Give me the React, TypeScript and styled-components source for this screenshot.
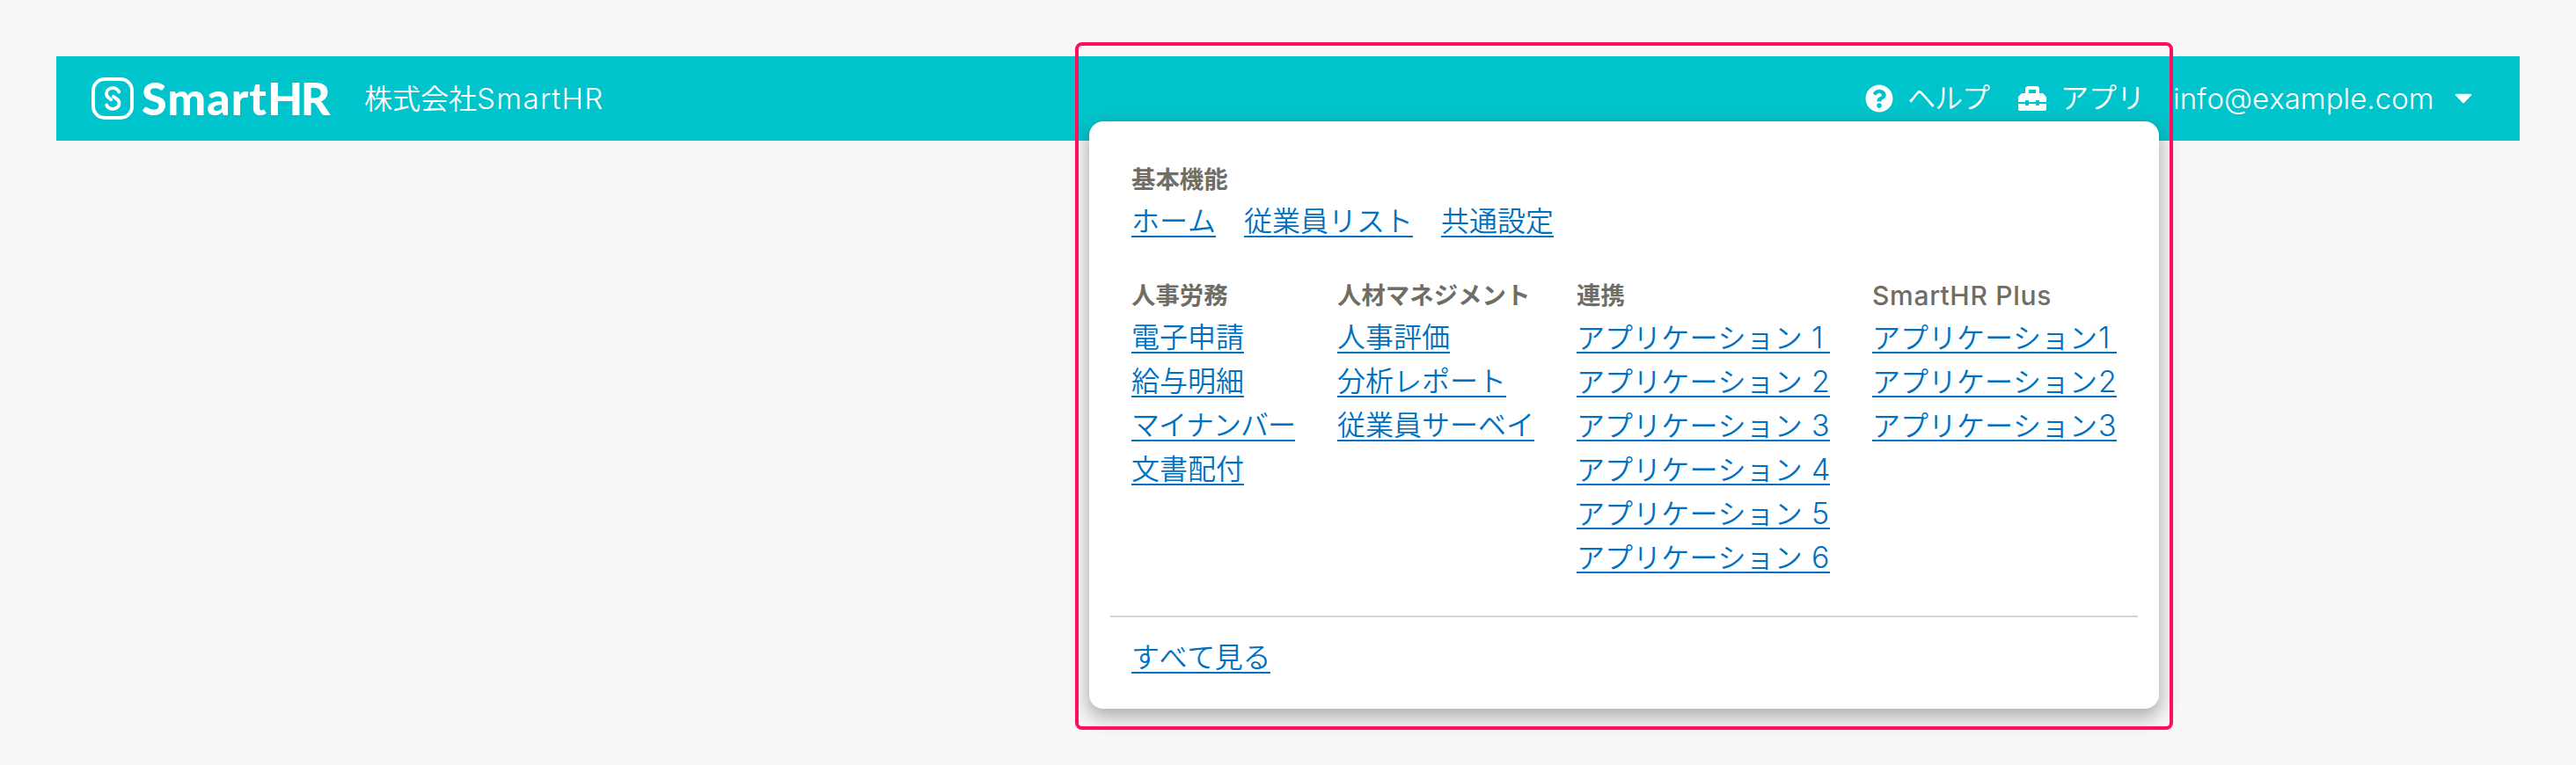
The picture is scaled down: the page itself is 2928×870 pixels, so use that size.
import React from 'react';
import styled, { createGlobalStyle } from 'styled-components';
import { FaQuestionCircle, FaToolbox } from 'react-icons/fa';

const GlobalStyle = createGlobalStyle`
  * { box-sizing: border-box; }
  body {
    margin: 0;
    background: #f8f7f5;
    font-family: Inter, "Noto Sans CJK JP", sans-serif;
    font-size: 32px;
    font-weight: 350;
    font-kerning: none;
    line-height: 1;
  }
`;

const Page = styled.div`
  position: relative;
  height: 870px;
  padding: 64px;
  overflow: hidden;
`;

const Header = styled.header`
  display: flex;
  align-items: center;
  height: 96px;
  padding: 0 54px 0 40px;
  background: #00c4cc;
  color: #fff;
`;

const Logo = styled.div`
  display: flex;
  align-items: center;
  width: 310px;
`;

const LogoMark = styled.svg`
  display: block;
  flex: none;
  width: 48px;
  height: 48px;
  margin-right: 9px;
`;

const LogoText = styled.span`
  font-family: Lato, sans-serif;
  font-size: 52px;
  font-weight: 900;
  font-kerning: normal;
  letter-spacing: 1px;
  line-height: 94px;
  height: 96px;
  white-space: nowrap;
`;

const LogoSuffix = styled.span`
  letter-spacing: -2.4px;
`;

const Label = styled.span<{ $spacing?: number }>`
  line-height: 48px;
  white-space: nowrap;
  letter-spacing: ${({ $spacing = 0 }) => $spacing}px;
`;

const Latin = styled.span`
  font-size: 33px;
  letter-spacing: 1.4px;
`;

const Nav = styled.nav`
  display: flex;
  align-items: center;
  margin-left: auto;
`;

const NavItem = styled.div<{ $width: number }>`
  display: flex;
  align-items: center;
  gap: 16px;
  width: ${({ $width }) => $width}px;

  svg {
    flex: none;
    width: 32px;
    height: 32px;
  }
`;

const Account = styled.div`
  display: flex;
  align-items: center;
  justify-content: space-between;
  width: 340px;
`;

const Email = styled.span`
  font-size: 33px;
  line-height: 48px;
`;

const Caret = styled.svg`
  display: block;
  width: 20px;
  height: 12px;
`;

const Menu = styled.section`
  position: absolute;
  top: 138px;
  left: 1238px;
  display: flex;
  flex-direction: column;
  width: 1216px;
  height: 668px;
  padding: 48px 24px 0;
  border-radius: 16px;
  background: #fff;
  box-shadow: 0 8px 20px 2px rgba(51, 51, 51, 0.36);
`;

const Groups = styled.div`
  display: flex;
  gap: 48px;
  padding-left: 24px;
`;

const Group = styled.div<{ $width?: number }>`
  width: ${({ $width }) => ($width ? `${$width}px` : 'auto')};
  height: 132px;
`;

const Heading = styled.h2<{ $latin?: boolean }>`
  margin: 0 0 6px;
  color: #706d65;
  font-size: ${({ $latin }) => ($latin ? 30 : 27.43)}px;
  font-weight: ${({ $latin }) => ($latin ? 550 : 700)};
  letter-spacing: ${({ $latin }) => ($latin ? 0.7 : 0)}px;
  line-height: 36px;
  white-space: nowrap;
`;

const Links = styled.ul<{ $row?: boolean }>`
  display: flex;
  flex-direction: ${({ $row }) => ($row ? 'row' : 'column')};
  align-items: flex-start;
  gap: ${({ $row }) => ($row ? '0 32px' : '8px')};
  margin: 0;
  padding: 0;
  list-style: none;
`;

const Link = styled.a<{ $spacing?: number }>`
  display: block;
  height: 42px;
  border-bottom: 2px solid #0071c1;
  color: #0071c1;
  line-height: 48px;
  white-space: nowrap;
  letter-spacing: ${({ $spacing = 0 }) => $spacing}px;
`;

const Digit = styled.span`
  display: inline-block;
  width: 22px;
  padding-left: 1px;
  font-size: 34px;
`;

const Footer = styled.div`
  display: flex;
  margin-top: auto;
  height: 106px;
  padding: 22px 24px 0;
  border-top: 2px solid #d6d3d0;
`;

const Highlight = styled.div`
  position: absolute;
  top: 48px;
  left: 1222px;
  width: 1248px;
  height: 782px;
  border: 4px solid #ff0d60;
  border-radius: 8px;
  pointer-events: none;
`;

type Item = { text: string; digit?: number; spacing?: number };
type Category = { title: string; latin?: boolean; width: number; items: Item[] };

const categories: Category[] = [
  {
    title: '人事労務',
    width: 186,
    items: [
      { text: '電子申請' },
      { text: '給与明細' },
      { text: 'マイナンバー', spacing: -1 },
      { text: '文書配付' },
    ],
  },
  {
    title: '人材マネジメント',
    width: 224,
    items: [{ text: '人事評価' }, { text: '分析レポート' }, { text: '従業員サーベイ' }],
  },
  {
    title: '連携',
    width: 288,
    items: [1, 2, 3, 4, 5, 6].map((digit) => ({ text: 'アプリケーション ', digit, spacing: 0.1 })),
  },
  {
    title: 'SmartHR Plus',
    latin: true,
    width: 278,
    items: [1, 2, 3].map((digit) => ({ text: 'アプリケーション', digit })),
  },
];

const MenuLink = ({ text, digit, spacing }: Item) => (
  <li>
    <Link $spacing={spacing}>
      {text}
      {digit && <Digit>{digit}</Digit>}
    </Link>
  </li>
);

export default function App() {
  return (
    <>
      <GlobalStyle />
      <Page>
        <Header>
          <Logo>
            <LogoMark viewBox="0 0 48 48" fill="none" stroke="#fff" strokeWidth="4" strokeLinecap="round">
              <rect x="2" y="2" width="44" height="44" rx="13" />
              <path d="M31.2 16.6C30.2 14.2 27.6 12.2 24.3 12.2C20.2 12.2 17 14.8 17 18.4C17 20.8 18 22 19.6 23.2L22.2 25.2" strokeWidth="3.8" />
              <path d="M17.2 31.4C18.2 33.8 21 35.8 24.3 35.8C28.4 35.8 31.5 33 31.5 29.6C31.5 27.4 30.6 25.8 28.8 24.6L24.8 21.8" strokeWidth="3.8" />
            </LogoMark>
            <LogoText>
              Smart<LogoSuffix>HR</LogoSuffix>
            </LogoText>
          </Logo>
          <Label>
            株式会社<Latin>SmartHR</Latin>
          </Label>
          <Nav>
            <NavItem $width={174}>
              <FaQuestionCircle />
              <Label $spacing={-1}>ヘルプ</Label>
            </NavItem>
            <NavItem $width={176}>
              <FaToolbox />
              <Label>アプリ</Label>
            </NavItem>
            <Account>
              <Email>info@example.com</Email>
              <Caret viewBox="0 0 20 12" fill="#fff">
                <path d="M2 .7H18Q20 1 18.8 2.4L11.4 10.6Q10 12 8.6 10.6L1.2 2.4Q0 1 2 .7Z" />
              </Caret>
            </Account>
          </Nav>
        </Header>

        <Menu>
          <Groups>
            <Group>
              <Heading>基本機能</Heading>
              <Links $row>
                <MenuLink text="ホーム" />
                <MenuLink text="従業員リスト" />
                <MenuLink text="共通設定" />
              </Links>
            </Group>
          </Groups>
          <Groups>
            {categories.map(({ title, latin, width, items }) => (
              <Group key={title} $width={width}>
                <Heading $latin={latin}>{title}</Heading>
                <Links>
                  {items.map((item, index) => (
                    <MenuLink key={index} {...item} />
                  ))}
                </Links>
              </Group>
            ))}
          </Groups>
          <Footer>
            <Links>
              <MenuLink text="すべて見る" spacing={-0.4} />
            </Links>
          </Footer>
        </Menu>
        <Highlight />
      </Page>
    </>
  );
}
